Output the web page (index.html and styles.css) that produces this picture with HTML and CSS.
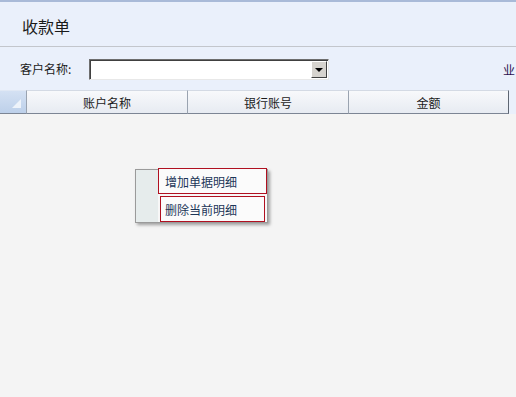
FILE: index.html
```html
<!DOCTYPE html>
<html lang="zh-CN">
<head>
    <meta charset="UTF-8">
    <title>收款单</title>
    <link rel="stylesheet" href="styles.css">
</head>
<body>
    <div class="page">
        <div class="title-bar">
            <h1>收款单</h1>
        </div>

        <div class="filter-row">
            <label class="filter-label">客户名称:</label>
            <div class="combo">
                <div class="combo-text"></div>
                <div class="combo-btn"><span class="arrow"></span></div>
            </div>
            <span class="cut-link">业</span>
        </div>

        <div class="grid-head">
            <div class="corner"></div>
            <div class="col">账户名称</div>
            <div class="col">银行账号</div>
            <div class="col last">金额</div>
        </div>

        <div class="grid-body"></div>

        <div class="context-menu">
            <div class="menu-gutter"></div>
            <div class="menu-items">
                <div class="menu-item first">增加单据明细</div>
                <div class="menu-item second">删除当前明细</div>
            </div>
        </div>
    </div>
</body>
</html>
```

FILE: styles.css
```css
* {
    margin: 0;
    padding: 0;
    box-sizing: border-box;
}

body {
    font-family: "Noto Sans CJK SC", "Liberation Sans", sans-serif;
    font-size: 12px;
    color: #1e1e1e;
    background: #f4f4f4;
    width: 516px;
    height: 397px;
    overflow: hidden;
}

.page {
    position: relative;
    height: 397px;
    display: flex;
    flex-direction: column;
}

.title-bar {
    height: 47px;
    background: #eaf0fb;
    border-top: 2px solid #a9bad8;
    border-bottom: 1px solid #c3c6cc;
    padding-left: 22px;
    display: flex;
    align-items: center;
}

.title-bar h1 {
    font-size: 16px;
    font-weight: normal;
    color: #1a1a1a;
    margin-top: 3px;
}

.filter-row {
    height: 43px;
    background: #eaf0fb;
    display: flex;
    align-items: center;
    padding-left: 20px;
}

.filter-label {
    width: 69px;
    color: #1a1a1a;
}

.combo {
    width: 240px;
    height: 21px;
    display: flex;
    background: #fff;
    border-top: 1px solid #6e6e6e;
    border-left: 1px solid #6e6e6e;
    border-right: 1px solid #e8e8e8;
    border-bottom: 1px solid #e8e8e8;
    box-shadow: inset 1px 1px 0 #404040;
    margin-top: 2px;
}

.combo-text {
    flex: 1;
}

.combo-btn {
    width: 16px;
    margin: 1px 1px 1px 0;
    background: #d6d3ce;
    border-top: 1px solid #fff;
    border-left: 1px solid #fff;
    border-right: 1px solid #404040;
    border-bottom: 1px solid #404040;
    display: flex;
    align-items: center;
    justify-content: center;
}

.arrow {
    width: 0;
    height: 0;
    border-left: 4px solid transparent;
    border-right: 4px solid transparent;
    border-top: 4px solid #000;
}

.cut-link {
    margin-left: auto;
    margin-right: 1px;
    color: #2a1050;
    font-size: 12px;
    margin-top: 2px;
}

.grid-head {
    height: 24px;
    display: flex;
    background: #eaf0fb;
}

.corner {
    width: 26px;
    background: linear-gradient(#d4e1f3, #bdd0ea);
    border-top: 1px solid #e0e8f4;
    border-bottom: 1px solid #7c8594;
    position: relative;
}

.corner::after {
    content: "";
    position: absolute;
    right: 5px;
    bottom: 5px;
    width: 0;
    height: 0;
    border-left: 9px solid transparent;
    border-bottom: 9px solid #eef3fa;
}

.col {
    width: 161px;
    background: linear-gradient(#f8f9fb, #e7ebf2);
    border-top: 1px solid #d4dae4;
    border-left: 1px solid #9aa3b0;
    border-bottom: 1px solid #7c8594;
    display: flex;
    align-items: center;
    justify-content: center;
    color: #1a1a1a;
}

.col.last {
    border-right: 1px solid #5e6672;
}

.grid-body {
    flex: 1;
    background: #f4f4f4;
}

.context-menu {
    position: absolute;
    left: 135px;
    top: 169px;
    width: 133px;
    height: 54px;
    display: flex;
    background: #f7f7f7;
    border: 1px solid #9a9a9a;
    box-shadow: 2px 2px 3px rgba(0, 0, 0, 0.35);
}

.menu-gutter {
    width: 22px;
    background: #e6ecec;
}

.menu-items {
    flex: 1;
    display: flex;
    flex-direction: column;
}

.menu-item {
    color: #1c3658;
    display: flex;
    align-items: center;
    padding-left: 6px;
    border: 1px solid #b01020;
}

.menu-item.first {
    height: 27px;
    margin: -2px 0 0 0;
    background: #fbfbfb;
}

.menu-item.second {
    height: 27px;
    margin: 2px 2px 0 2px;
    padding-left: 4px;
    background: #fbfbfb;
}
```
